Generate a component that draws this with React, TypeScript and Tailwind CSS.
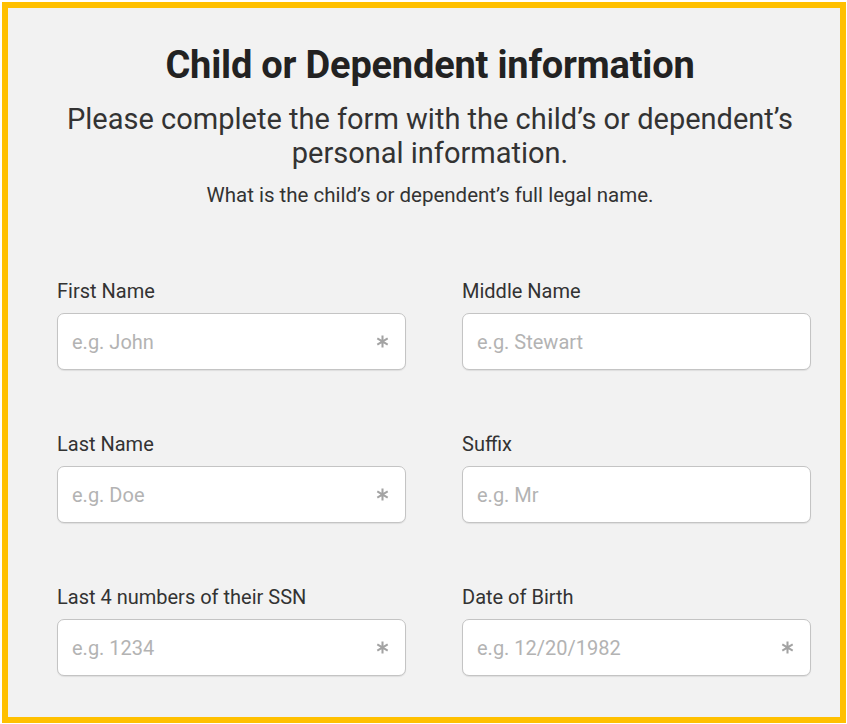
import React from 'react';

const AsteriskIcon: React.FC<{ className?: string }> = (props) => (
  <svg viewBox="0 0 14 14" fill="none" stroke="currentColor" strokeWidth={2.2} strokeLinecap="butt" {...props}>
    <path d="M7 0.5v13M1.4 3.75l11.2 6.5M1.4 10.25l11.2-6.5" />
  </svg>
);

type Field = { label: string; placeholder: string; required: boolean };

const rows: Field[][] = [
  [
    { label: 'First Name', placeholder: 'e.g. John', required: true },
    { label: 'Middle Name', placeholder: 'e.g. Stewart', required: false },
  ],
  [
    { label: 'Last Name', placeholder: 'e.g. Doe', required: true },
    { label: 'Suffix', placeholder: 'e.g. Mr', required: false },
  ],
  [
    { label: 'Last 4 numbers of their SSN', placeholder: 'e.g. 1234', required: true },
    { label: 'Date of Birth', placeholder: 'e.g. 12/20/1982', required: true },
  ],
];

const FormField: React.FC<{ field: Field }> = ({ field }) => (
  <div className="flex flex-col">
    <label className="text-[20px] leading-[26px] text-[#333]">{field.label}</label>
    <div className="mt-[9px] h-[57px] rounded-[7px] border border-[#c4c4c4] bg-white shadow-[0_1px_1px_rgba(0,0,0,0.08)] flex items-center pl-[14px] pr-[16px]">
      <span className="flex-1 text-[20px] text-[#b3b3b3]">{field.placeholder}</span>
      {field.required && <AsteriskIcon className="h-[13px] w-[13px] text-[#a3a3a3]" />}
    </div>
  </div>
);

export default function App() {
  return (
    <div className="w-[847px] h-[724px] bg-white pt-[2px] pl-[2px] pr-[1px] pb-[1px]" style={{ fontFamily: 'Roboto, "Liberation Sans", sans-serif' }}>
      <div className="h-full border-[6px] border-[#ffc000] bg-[#f2f2f2] flex flex-col">
        <div className="pt-[35px] pl-[12px] flex flex-col items-center text-center">
          <h1 className="text-[38px] leading-[44px] font-bold text-[#222] tracking-[-0.2px]">Child or Dependent information</h1>
          <p className="mt-[15px] text-[29px] leading-[34px] text-[#333] w-[780px]">
            Please complete the form with the child’s or dependent’s personal information.
          </p>
          <p className="mt-[12px] text-[20.5px] leading-[26px] text-[#333]">
            What is the child’s or dependent’s full legal name.
          </p>
        </div>
        <div className="mt-[70px] pl-[49px] pr-[29px] flex flex-col gap-[61px]">
          {rows.map((row, i) => (
            <div key={i} className="grid grid-cols-2 gap-x-[56px]">
              {row.map((f) => (
                <FormField key={f.label} field={f} />
              ))}
            </div>
          ))}
        </div>
      </div>
    </div>
  );
}
